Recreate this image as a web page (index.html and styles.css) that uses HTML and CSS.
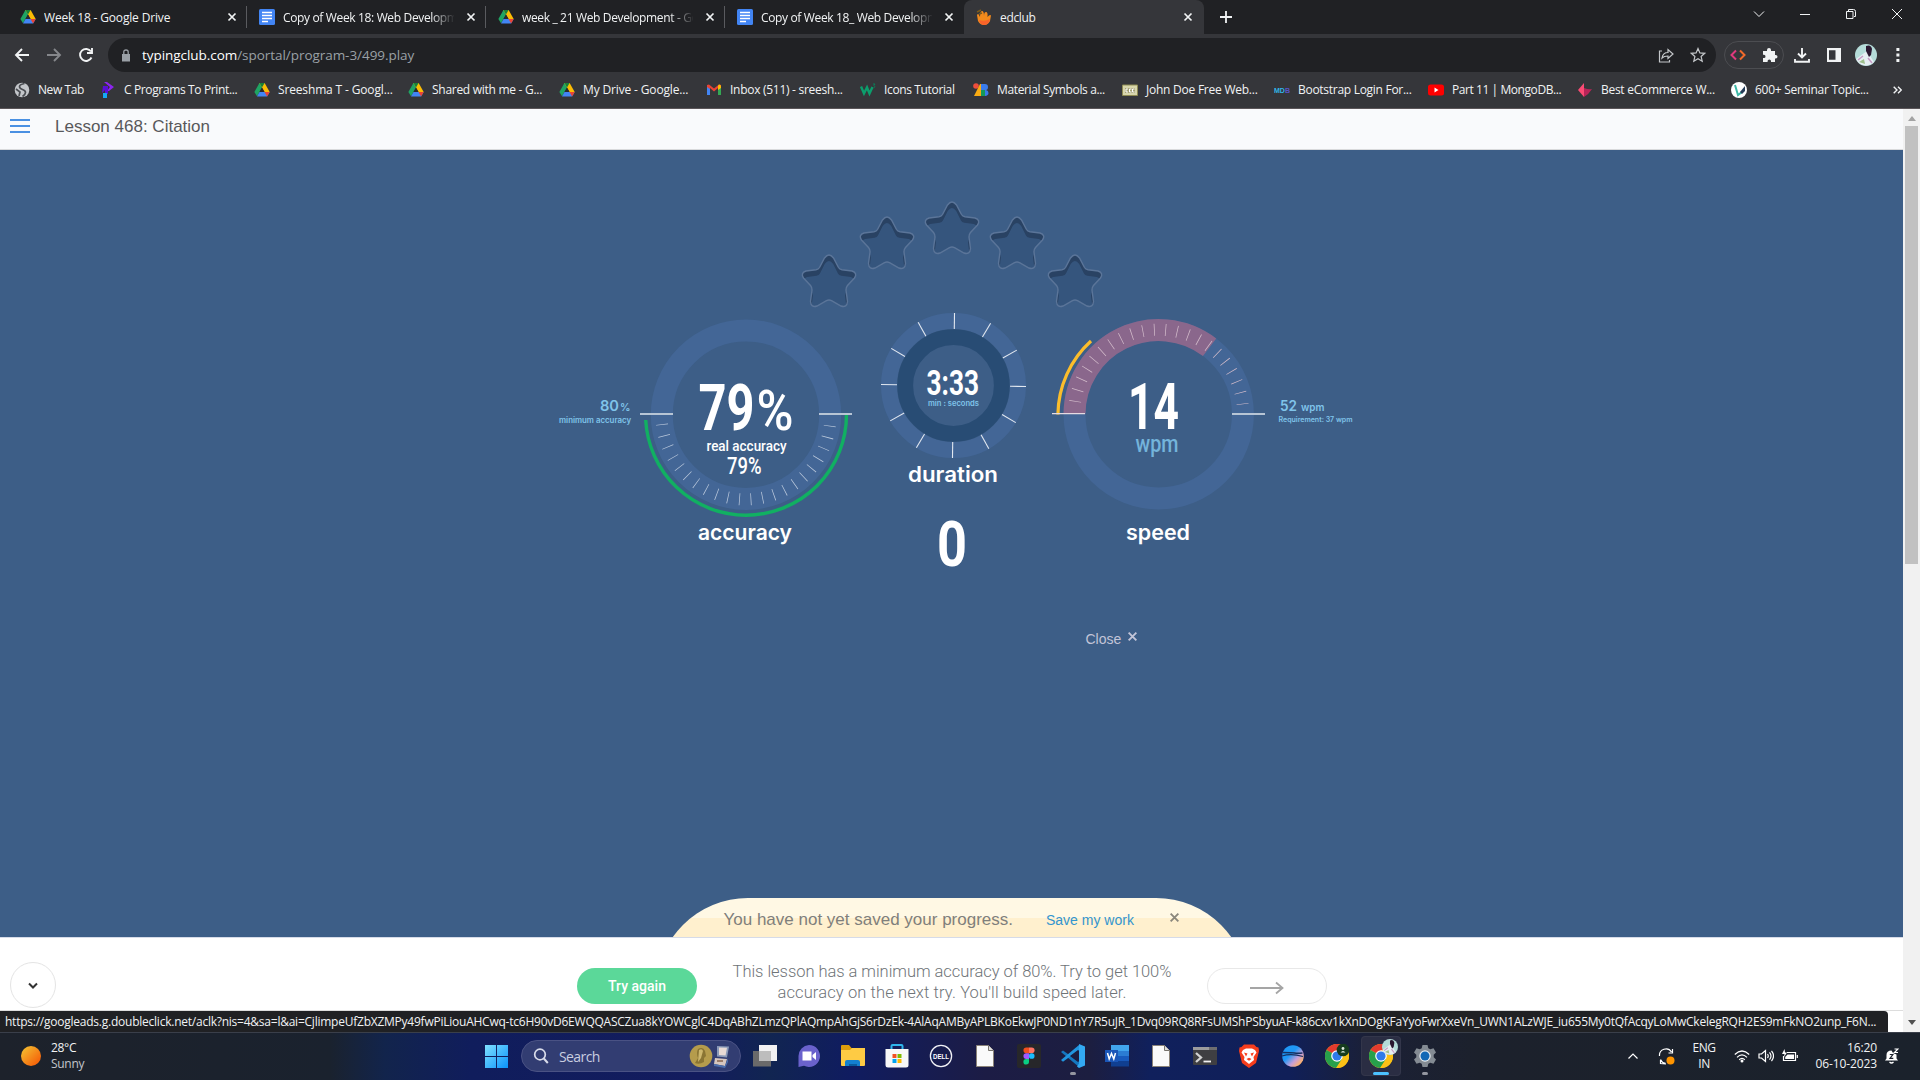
FILE: index.html
```html
<!DOCTYPE html>
<html lang="en">
<head>
<meta charset="utf-8">
<title>edclub</title>
<link rel="stylesheet" href="styles.css">
</head>
<body>
<svg class="defs" width="0" height="0" aria-hidden="true">
  <defs>
    <symbol id="drive" viewBox="0 0 16 16">
      <path d="M5.4 1h5.2L8 5.6 3 14.3.4 10z" fill="#1fa463"/>
      <path d="M5.4 1h5.2l5.1 9h-5.2z" fill="#fbbc04"/>
      <path d="M5.4 1L8 5.6 10.6 1z" fill="#188038"/>
      <path d="M5.5 10h10.2l-2.6 4.5H3z" fill="#4285f4"/>
      <path d="M10.5 10h5.2l-2.6 4.5z" fill="#ea4335"/>
      <path d="M8 5.6L10.5 10h-5z" fill="#292a2d"/>
    </symbol>
    <symbol id="docs" viewBox="0 0 16 16">
      <rect width="16" height="16" rx="1.5" fill="#4285f4"/>
      <path d="M3 4h10M3 7h10M3 10h10M3 13h6" stroke="#fff" stroke-width="1.5" transform="translate(0 -.5)"/>
    </symbol>
    <symbol id="x" viewBox="0 0 10 10"><path d="M1.5 1.5l7 7M8.5 1.5l-7 7" stroke="currentColor" stroke-width="1.7" fill="none"/></symbol>
    <symbol id="chrome" viewBox="0 0 24 24">
      <circle cx="12" cy="12" r="12" fill="#fbc116"/>
      <path d="M12 12L1.6 6A12 12 0 0 1 22.4 6z" fill="#e33b2e"/>
      <path d="M12 12L1.6 6A12 12 0 0 0 11 24L17 14.9z" fill="#27a04b"/>
      <path d="M12 6h10.4A12 12 0 0 1 11.5 24l5.7-9z" fill="#fbc116"/>
      <circle cx="12" cy="12" r="5.8" fill="#fff"/><circle cx="12" cy="12" r="4.6" fill="#2f7bea"/>
    </symbol>
    <symbol id="file" viewBox="0 0 24 24">
      <path d="M3.5 1.5h12l5 5v16h-17z" fill="#fafafa" stroke="#8b8378" stroke-width="1"/>
      <path d="M15.5 1.5v5h5" fill="#ddd" stroke="#77736c"/>
    </symbol>
    <symbol id="photo" viewBox="0 0 22 22">
      <circle cx="11" cy="11" r="11" fill="#b5dcd9"/>
      <path d="M1 15L12 7l7 11a11 11 0 0 1-16 0z" fill="#e6eef2"/>
      <path d="M11 2q5-2 6 3l-1 6-2 2-3-6z" fill="#2a1830"/>
      <path d="M3 16l5-4M13 14l4 5" stroke="#c59bc4" stroke-width="1.5"/><path d="M4 18l5-3 1 5z" fill="#9ec08d"/>
    </symbol>
    <path id="star" d="M22.5 4Q27-2 31.500 4L36.500 13.500Q37.500 15.300 40 15.700L50 17Q55.800 18.800 52.500 24L45.500 31.500Q43.800 33.500 44 36L45.500 47.500Q45 54 39 52L29.500 46.700Q27 45.300 24.500 46.700L15 52Q9 54 8.500 47.500L10 36Q10.200 33.500 8.500 31.500L1.500 24Q-1.800 18.800 4 17L14 15.700Q16.500 15.300 17.500 13.500Z"/>
    <clipPath id="star-clip"><use href="#star"/></clipPath>
    <symbol id="empty-star" viewBox="-1 -1 56 56">
      <use href="#star" fill="#294263"/>
      <g clip-path="url(#star-clip)"><use href="#star" y="6" transform="translate(1.300) scale(.95 1)" fill="#35557d"/></g>
      <use href="#star" fill="none" stroke="#5b7599" stroke-width="1.400"/>
    </symbol>
    <linearGradient id="sun" x1="0" y1="0" x2="1" y2="1"><stop offset=".1" stop-color="#f3bc2f"/><stop offset=".8" stop-color="#f5680c"/></linearGradient>
    <linearGradient id="win" x1="0" y1="0" x2="1" y2="1"><stop stop-color="#7fe0ff"/><stop offset="1" stop-color="#0a93fb"/></linearGradient>
    <linearGradient id="orb" x1="0" y1="0" x2="1" y2="1"><stop offset=".4" stop-color="#1f97f5"/><stop offset=".65" stop-color="#c79fd8"/><stop offset=".85" stop-color="#ffb26a"/></linearGradient>
  </defs>
</svg>

<header class="tabstrip">
  <div class="tab tab-first"><svg class="fav"><use href="#drive"/></svg><span class="tab-title">Week 18 - Google Drive</span><svg class="tab-x"><use href="#x"/></svg></div>
  <div class="tab"><svg class="fav"><use href="#docs"/></svg><span class="tab-title fade">Copy of Week 18: Web Development</span><svg class="tab-x"><use href="#x"/></svg></div>
  <div class="tab"><svg class="fav"><use href="#drive"/></svg><span class="tab-title fade">week _ 21 Web Development - Google</span><svg class="tab-x"><use href="#x"/></svg></div>
  <div class="tab"><svg class="fav"><use href="#docs"/></svg><span class="tab-title fade">Copy of Week 18_ Web Development</span><svg class="tab-x"><use href="#x"/></svg></div>
  <div class="tab active"><svg class="fav" viewBox="0 0 16 16"><path d="M1 6q1-2 2 0l1 2q0-6 2-6t2 5q0-4 2-4t1.500 5Q14 5 15 6.500L14 12q-2 4-6 4t-6-4z" fill="#f28a1c"/><path d="M3 11q6 2 11-1-1 6-6 6-4 0-5-5z" fill="#f8632a"/><path d="M1 3l4-2M3 5l3-1" stroke="#7a5b1c" stroke-width="1.500"/></svg><span class="tab-title">edclub</span><svg class="tab-x"><use href="#x"/></svg></div>
  <svg class="new-tab" viewBox="0 0 12 12"><path d="M6 0v12M0 6h12" stroke="#f1f3f4" stroke-width="1.800"/></svg>
  <div class="window-buttons">
    <svg viewBox="0 0 10 10"><path d="M0 2.500l5 5 5-5"/></svg>
    <svg viewBox="0 0 10 10"><path d="M0 5.500h10"/></svg>
    <svg viewBox="0 0 10 10"><path d="M.5 2.500h6.500v7H.500zM2.500 2V.500h5q2 0 2 2v5H8"/></svg>
    <svg viewBox="0 0 10 10"><path d="M0 0l10 10M10 0L0 10"/></svg>
  </div>
</header>

<nav class="toolbar">
  <svg class="nav-icon" viewBox="0 0 16 16"><path d="M15 8H2M8 2L2 8l6 6" stroke="#f1f3f4"/></svg>
  <svg class="nav-icon" viewBox="0 0 16 16"><path d="M1 8h13M8 2l6 6-6 6" stroke="#85878b"/></svg>
  <svg class="nav-icon" viewBox="0 0 16 16"><path d="M13.500 10.500A6 6 0 1 1 13 4.500M14 1v5H9" stroke="#f1f3f4"/></svg>
  <div class="omnibox">
    <svg class="lock" viewBox="0 0 10 13"><path d="M1 5h8v7.500H1z" fill="#9aa0a6"/><path d="M2.800 5V3q0-2 2.200-2t2.200 2v2" fill="none" stroke="#9aa0a6" stroke-width="1.300"/></svg>
    <span class="url"><b>typingclub.com</b>/sportal/program-3/499.play</span>
    <svg class="omni-icon" viewBox="0 0 16 16"><path d="M4 4H1.500v11h10v-2M4 11q1-5.500 6-5.500V2.500l5 4.500-5 4.500V9q-4 0-6 2z"/></svg>
    <svg class="omni-icon" viewBox="0 0 16 16"><path d="M8 1.500l1.900 4.400 4.800.4-3.600 3.200 1.100 4.700L8 11.700l-4.200 2.500 1.100-4.700L1.300 6.300l4.800-.4z"/></svg>
  </div>
  <div class="extensions">
    <svg viewBox="0 0 16 16"><path d="M6 3.500L1.500 8 6 12.500" fill="none" stroke="#e0397d" stroke-width="2"/><path d="M10 3.500L14.500 8 10 12.500" fill="none" stroke="#f26a2a" stroke-width="2"/></svg>
    <svg viewBox="0 0 16 16"><path d="M1 4h4V3q0-2 2-2t2 2v1h4v4h.7q1.800 0 1.800 1.800t-1.800 1.800H13V15H9v-1q0-1.600-1.700-1.600T5.600 14v1H1v-4h1q1.500 0 1.500-1.600T2 7.800H1z" fill="#f1f3f4"/></svg>
  </div>
  <svg class="tool-icon" viewBox="0 0 16 16"><path d="M8 1v9M4 6.500L8 10.500l4-4M1 12v2.800h14V12" fill="none" stroke="#f1f3f4" stroke-width="1.900"/></svg>
  <svg class="tool-icon" viewBox="0 0 16 16"><path d="M1 1h14v14H1zM3 3.200v9.600h6.500V3.200z" fill="#f1f3f4" fill-rule="evenodd"/></svg>
  <svg class="avatar"><use href="#photo"/></svg>
  <svg class="menu-dots" viewBox="0 0 4 14"><path d="M.4 0h3v3h-3zM.4 5.500h3v3h-3zM.4 11h3v3h-3z" fill="#f1f3f4"/></svg>
</nav>

<nav class="bookmarks">
  <a class="tight"><svg viewBox="0 0 16 16"><circle cx="8" cy="8" r="7.300" fill="#c3c6ca"/><path d="M10.500 1.500q-5 1-5 3t3 3 3 3-3 4M2 7l4 3-1 4" fill="none" stroke="#4a4d52" stroke-width="1.700"/></svg>New Tab</a>
  <a class="snug"><svg viewBox="0 0 16 16"><path d="M4 0h3l7 5-5 4H7l3-4z" fill="#8d25f0"/><path d="M3 4h5v8H5V8l-3 3z" fill="#5a0fd6"/><path d="M3 11h4v5H3z" fill="#14a9f5"/></svg>C Programs To Print...</a>
  <a class="loose"><svg><use href="#drive"/></svg>Sreeshma T - Googl...</a>
  <a><svg><use href="#drive"/></svg>Shared with me - G...</a>
  <a class="loose"><svg><use href="#drive"/></svg>My Drive - Google...</a>
  <a><svg viewBox="0 0 16 16"><path d="M1 3v10h3V6l4 3.500L12 6v7h3V3l-2-.5L8 6.500 3 2.500z" fill="#ea4335"/><path d="M1 5v8h3V7z" fill="#4285f4"/><path d="M15 5v8h-3V7z" fill="#34a853"/><path d="M12 3.500l1-1q2 0 2 2V6l-3 2z" fill="#fbbc04"/></svg>Inbox (511) - sreesh...</a>
  <a class="snug"><svg viewBox="0 0 16 16"><path d="M1 4.500l3 7 3-6 2.500 6 3-6.500" fill="none" stroke="#0c9d6c" stroke-width="2.400"/><path d="M13 2h2l-1 1.500 1 1.200L13.500 6" fill="none" stroke="#0c7d58"/></svg>Icons Tutorial</a>
  <a class="snug"><svg viewBox="0 0 16 16"><circle cx="3" cy="4" r="2.800" fill="#ef4d3b"/><path d="M1 14L7 2h2v12z" fill="#f9ab13"/><path d="M8 2h4q3 0 3 3t-2 3q2.500.5 2.500 3T12 14H8z" fill="#3a7bea"/><path d="M8 8h4v6H8z" fill="#159958"/></svg>Material Symbols a...</a>
  <a class="jd"><svg viewBox="0 0 16 16"><path d="M.5 3h15v10.500H.5z" fill="#d8d6ab" stroke="#8e8b53"/><path d="M3 6h10v5H3z" fill="#a5a275"/><path d="M6 7H4v3h2M9.500 7H7.500v3h2M12.500 7h-2v3h2" stroke="#fff" fill="none"/></svg>John Doe Free Web...</a>
  <a><svg viewBox="0 0 16 16"><text x="0" y="10.500" class="mdb" textLength="16" lengthAdjust="spacingAndGlyphs"><tspan fill="#31b5e8">MD</tspan><tspan fill="#5a55c8">B</tspan></text></svg>Bootstrap Login For...</a>
  <a class="tight"><svg viewBox="0 0 16 16"><rect y="2.500" width="16" height="11" rx="2.500" fill="#f00"/><path d="M6.500 5.500v5l4-2.500z" fill="#fff"/></svg>Part 11 | MongoDB...</a>
  <a><svg viewBox="0 0 16 16"><path d="M7 1v14L1 8z" fill="#fb4b74"/><path d="M7 6q5 2 8 1-3 5-8 8z" fill="#b82458"/></svg>Best eCommerce W...</a>
  <a><svg viewBox="0 0 16 16"><circle cx="8" cy="8" r="8" fill="#fff"/><path d="M4 3l3 10 4-3" fill="none" stroke="#3fb9a8" stroke-width="2"/><path d="M9 10l5-6v5l-3 3z" fill="#243c58"/></svg>600+ Seminar Topic...</a>
  <svg class="overflow" viewBox="0 0 9 8"><path d="M.7.700L4 4 .7 7.300M5 .700L8.300 4 5 7.300" fill="none" stroke="#f1f3f4" stroke-width="1.400"/></svg>
</nav>

<div class="viewport">
  <div class="page">
    <div class="lesson-bar">
      <div class="burger"><i></i><i></i><i></i></div>
      <h1>Lesson 468: Citation</h1>
    </div>

    <main class="stage">
      <div class="stars">
        <svg class="low"><use href="#empty-star"/></svg><svg class="mid s2"><use href="#empty-star"/></svg><svg class="s3"><use href="#empty-star"/></svg><svg class="mid s4"><use href="#empty-star"/></svg><svg class="low s5"><use href="#empty-star"/></svg>
      </div>
      <div class="gauges">
        <svg class="gauge wide" viewBox="550 310 320 265">
          <circle class="ring" cx="746" cy="414.700" r="84.200"/>
          <path class="ticks" pathLength="166.400" stroke-dasharray=".5 7.400" d="M829.800 425.700A84.500 84.500 0 0 1 662 424.200"/>
          <path class="arc-green" d="M846.500 414.700A100.500 100.500 0 0 1 746 515.200A100.500 100.500 0 0 1 645.700 420"/>
          <path class="mark" d="M640 414h33M819 414h33"/>
          <g class="num">
            <text x="698.500" y="429.700" font-size="65.500" textLength="56" lengthAdjust="spacingAndGlyphs">79</text>
            <text class="light" x="756.500" y="429.700" font-size="56" textLength="37" lengthAdjust="spacingAndGlyphs">%</text>
            <text class="light" x="706.500" y="451" font-size="15" textLength="80" lengthAdjust="spacingAndGlyphs">real accuracy</text>
            <text class="light" x="727" y="473.700" font-size="23" textLength="34.500" lengthAdjust="spacingAndGlyphs">79%</text>
          </g>
          <text class="label" x="698" y="540" textLength="94" lengthAdjust="spacingAndGlyphs">accuracy</text>
          <g class="note">
            <text x="600" y="411" font-size="14" textLength="19" lengthAdjust="spacingAndGlyphs">80</text>
            <text x="620" y="411" font-size="11" textLength="10.500" lengthAdjust="spacingAndGlyphs">%</text>
            <text x="559" y="423" font-size="7.500" textLength="72" lengthAdjust="spacingAndGlyphs">minimum accuracy</text>
          </g>
        </svg>
        <svg class="gauge narrow" viewBox="870 310 166 265">
          <circle cx="953.500" cy="385.500" r="64.500" fill="none" stroke="#436696" stroke-width="16"/>
          <circle cx="953.500" cy="385.500" r="48.300" fill="none" stroke="#284c74" stroke-width="15.800"/>
          <g class="dial-ticks" transform="translate(953.500 385.500) rotate(.800)">
            <path d="M56.500 0h16"/><path d="M56.500 0h16" transform="rotate(30)"/><path d="M56.500 0h16" transform="rotate(60)"/><path d="M56.500 0h16" transform="rotate(90)"/>
            <path d="M56.500 0h16" transform="rotate(120)"/><path d="M56.500 0h16" transform="rotate(150)"/><path d="M56.500 0h16" transform="rotate(180)"/><path d="M56.500 0h16" transform="rotate(210)"/>
            <path d="M56.500 0h16" transform="rotate(240)"/><path d="M56.500 0h16" transform="rotate(270)"/><path d="M56.500 0h16" transform="rotate(300)"/><path d="M56.500 0h16" transform="rotate(330)"/>
          </g>
          <g class="num">
            <text x="926.500" y="394.700" font-size="35.500" textLength="52.500" lengthAdjust="spacingAndGlyphs">3:33</text>
            <text x="937" y="565.700" font-size="63" textLength="30" lengthAdjust="spacingAndGlyphs">0</text>
          </g>
          <text class="tiny" x="928" y="406" textLength="51" lengthAdjust="spacingAndGlyphs">min : seconds</text>
          <text class="label" x="908" y="482" textLength="90" lengthAdjust="spacingAndGlyphs">duration</text>
        </svg>
        <svg class="gauge wide" viewBox="1036 310 320 265">
          <circle class="ring" cx="1158.700" cy="414.300" r="84.200"/>
          <path d="M1074.500 413.700A84.200 84.200 0 0 1 1209.600 347.200" fill="none" stroke="#8a678c" stroke-width="22"/>
          <path class="ticks pink" pathLength="165.100" stroke-dasharray=".5 7.340" d="M1075.100 401.700A84.500 84.500 0 0 1 1242.600 404.300"/>
          <path class="arc-yellow" d="M1057.900 414.500A101 101 0 0 1 1091 341"/>
          <path class="mark thin" d="M1052 413.700h33"/><path class="mark" d="M1232 414h33"/>
          <g class="num">
            <text x="1128" y="429" font-size="65" textLength="51" lengthAdjust="spacingAndGlyphs">14</text>
            <text class="unit" x="1135.500" y="451.700" font-size="23" textLength="43" lengthAdjust="spacingAndGlyphs">wpm</text>
          </g>
          <text class="label" x="1126" y="540" textLength="64" lengthAdjust="spacingAndGlyphs">speed</text>
          <g class="note">
            <text x="1280" y="411" font-size="14" textLength="17" lengthAdjust="spacingAndGlyphs">52</text>
            <text x="1301" y="411" font-size="10.500" textLength="23.500" lengthAdjust="spacingAndGlyphs">wpm</text>
            <text x="1278.500" y="422" font-size="7.300" textLength="74" lengthAdjust="spacingAndGlyphs">Requirement: 37 wpm</text>
          </g>
        </svg>
      </div>
      <div class="close-link"><span>Close</span><svg><use href="#x"/></svg></div>
      <div class="save-wrap">
        <div class="save-banner">
          <span class="save-text">You have not yet saved your progress.</span>
          <a class="save-link">Save my work</a>
          <svg class="save-x"><use href="#x"/></svg>
        </div>
      </div>
    </main>

    <footer class="actions">
      <div class="round"><svg viewBox="0 0 10 8"><path d="M1 1.500l4 4 4-4" fill="none" stroke="#333" stroke-width="2"/></svg></div>
      <button class="retry">Try again</button>
      <p class="hint"><span class="h1">This lesson has a minimum accuracy of 80%. Try to get 100%</span><span class="h2">accuracy on the next try. You'll build speed later.</span></p>
      <div class="next"><svg viewBox="0 0 34 14"><path d="M0 7h32M26 1.500L32.500 7 26 12.500" fill="none" stroke="#a5a5a5" stroke-width="1.800"/></svg></div>
    </footer>
  </div>
  <div class="scrollbar">
    <svg viewBox="0 0 8 5"><path d="M4 0l4 5H0z" fill="#a3a3a3"/></svg>
    <div class="thumb"></div>
    <svg viewBox="0 0 8 5"><path d="M0 0h8L4 5z" fill="#505050"/></svg>
  </div>
  <div class="status">https://googleads.g.doubleclick.net/aclk?nis=4&amp;sa=l&amp;ai=CjlimpeUfZbXZMPy49fwPiLiouAHCwq-tc6H90vD6EWQQASCZua8kYOWCglC4DqABhZLmzQPlAQmpAhGjS6rDzEk-4AlAqAMByAPLBKoEkwJP0ND1nY7R5uJR_1Dvq09RQ8RFsUMShPSbyuAF-k86cxv1kXnDOgKFaYyoFwrXxeVn_UWN1ALzWJE_iu655My0tQfAcqyLoMwCkelegRQH2ES9mFkNO2unp_F6N...</div>
</div>

<div class="taskbar">
  <div class="weather">
    <svg viewBox="0 0 20 20"><circle cx="10" cy="10" r="10" fill="url(#sun)"/></svg>
    <div><b>28°C</b><span>Sunny</span></div>
  </div>
  <svg class="start" viewBox="0 0 24 24"><path d="M0 0h11.500v11.500H0zM12.500 0H24v11.500H12.500zM0 12.500h11.500V24H0zM12.500 12.500H24V24H12.500z" fill="url(#win)"/></svg>
  <div class="search">
    <svg class="glass" viewBox="0 0 16 16"><circle cx="7" cy="6.500" r="5.300" fill="none" stroke="#d9dcea" stroke-width="1.700"/><path d="M10.800 10.500l4 4.500" stroke="#d9dcea" stroke-width="2"/></svg>
    <span>Search</span>
    <svg class="prize" viewBox="0 0 42 24"><circle cx="12" cy="12" r="11.300" fill="#b59c4c"/><path d="M9 5q5-3 7 2l1 5-2 2v4q-5 3-9 1l3-5q-2-5 0-9z" fill="#8a7533"/><path d="M10 6q3-2 4 1l-2 7-3 4z" fill="#cdb76d"/><path d="M28 2l12 .500-2 11-10-1z" fill="#8a99b8"/><path d="M30 3.500l8 .300-1.500 7.700-6.500-.500z" fill="#e8dad5"/><path d="M26 14l12 1-2 7-11-2z" fill="#d7c7bf"/><path d="M25 20l11 2 3-8v4l-3 6-11-2z" fill="#4c6fae"/><path d="M28 17h6" stroke="#87654f" stroke-width="1.500"/></svg>
  </div>
  <div class="apps">
    <svg viewBox="0 0 24 24"><path d="M6 1h18v16H6z" fill="#f2f2f2"/><path d="M0 7h18v15.500H0z" fill="#6a6a6a"/><path d="M6 7h12v10H6z" fill="#bdbdbd"/></svg>
    <svg viewBox="0 0 24 24"><path d="M12 1a11 11 0 1 1-5 20.800L1.500 23V12A11 11 0 0 1 12 1z" fill="#6a62cc"/><path d="M5.500 7.500h9v9h-9zM15.500 11l3.500-3v8l-3.500-3z" fill="#fff"/></svg>
    <svg viewBox="0 0 24 24"><path d="M0 2q0-1 1-1h7l2.500 3H23v8H0z" fill="#dc9c0c"/><path d="M0 6h9l2-2h13v17q0 1-1 1H1q-1 0-1-1z" fill="#fecb44"/><path d="M4 22v-4q0-2 2-2h11q2 0 2 2v4z" fill="#1480cf"/><path d="M8 22v-2h8v2z" fill="#0a5c9c"/></svg>
    <svg viewBox="0 0 24 24"><path d="M6.500 6V2q0-1 1-1h9q1 0 1 1v4" fill="none" stroke="#2fb5ec" stroke-width="2"/><path d="M.5 5h23v16q0 2.500-2.500 2.500H3Q.5 23.500.5 21z" fill="#f7f7f7"/><path d="M7.500 10h4v4h-4z" fill="#f25022"/><path d="M12.500 10h4v4h-4z" fill="#7fba00"/><path d="M7.500 15h4v4h-4z" fill="#00a4ef"/><path d="M12.500 15h4v4h-4z" fill="#ffb900"/></svg>
    <svg viewBox="0 0 24 24"><circle cx="12" cy="12" r="10.600" fill="none" stroke="#f1f1f6" stroke-width="1.300"/><text x="4" y="14.700" class="dell" textLength="16" lengthAdjust="spacingAndGlyphs">DELL</text></svg>
    <svg><use href="#file"/></svg>
    <svg viewBox="0 0 24 24"><rect width="24" height="24" rx="2" fill="#27272a"/><path d="M12 3.500H9.300a2.800 2.800 0 0 0 0 5.700H12z" fill="#f24e1e"/><path d="M12 3.500h2.700a2.800 2.800 0 0 1 0 5.700H12z" fill="#ff7262"/><path d="M12 9.200H9.300a2.800 2.800 0 0 0 0 5.700H12z" fill="#a259ff"/><circle cx="14.700" cy="12" r="2.850" fill="#1abcfe"/><path d="M12 14.900H9.300A2.800 2.800 0 1 0 12 17.700z" fill="#0acf83"/></svg>
    <div class="app running"><svg viewBox="0 0 24 24"><path d="M0 8l2-1.500L18 18v5z" fill="#1577bf"/><path d="M0 16l2 1.700L18 6V1z" fill="#2196e0"/><path d="M18 0l6 2.500v19L18 24l-2-1.500 2-3z" fill="#33a9f2"/><path d="M17 6v12l-8-6z" fill="#1c1d40"/></svg></div>
    <svg viewBox="0 0 24 24"><path d="M6 1h18v6H6z" fill="#41a5ee"/><path d="M6 7h18v5H6z" fill="#2b7cd3"/><path d="M6 12h18v5H6z" fill="#185abd"/><path d="M6 17h18v5.500H6z" fill="#103f91"/><path d="M0 6h13v12H0z" fill="#1a56b8"/><path d="M2.500 9l1.700 6L6.500 9.500 8.800 15l1.700-6" fill="none" stroke="#fff" stroke-width="1.500"/></svg>
    <svg><use href="#file"/></svg>
    <svg viewBox="0 0 24 24"><rect y="3" width="24" height="18" rx="1" fill="#3f3f42"/><path d="M0 3h16v3H0z" fill="#9b9b9d"/><path d="M16 3h8v3h-8z" fill="#6e6e70"/><path d="M3 9l5 4.500L3 18" fill="none" stroke="#d4d4d4" stroke-width="2.300"/><path d="M10.500 17.500H18" stroke="#f1f1f1" stroke-width="1.800"/></svg>
    <svg viewBox="0 0 24 24"><path d="M7 .500h10l2.500 2.500 2 .500L22 7l-3 12-7 5-7-5L2 7l.500-3.500 2-.500z" fill="#f63d1c"/><path d="M6 6l3-1.500h6L18 6l1.500 2.500-3 4.500.5 3-5 4-5-4 .500-3-3-4.500z" fill="#fff"/><path d="M7 8.500l3.500 1-1.500 3zM17 8.500l-3.500 1 1.500 3zM9.500 15l2.500-1.300 2.500 1.300-2.500 1.800z" fill="#f63d1c"/></svg>
    <svg viewBox="0 0 24 24"><circle cx="12" cy="12" r="10.800" fill="url(#orb)"/><path d="M1.500 8.500q9 0 12 .500t8 0M1 12q9-3 21 .500" fill="none" stroke="#16305f" stroke-width="1.300"/></svg>
    <svg viewBox="0 0 24 24"><use href="#chrome"/><circle cx="18" cy="6" r="6.300" fill="#163c1f"/><circle cx="18" cy="4.500" r="1.400" fill="#dfe9df"/><path d="M15.500 8.500q2.500-3 5 0z" fill="#dfe9df"/></svg>
    <div class="app current"><svg viewBox="0 0 24 24"><use href="#chrome"/></svg><svg class="badge" viewBox="0 0 22 22"><use href="#photo"/></svg></div>
    <div class="app running"><svg viewBox="0 0 24 24"><path d="M9.500 1h5l.8 3.200 2 1 3.200-.9 2.500 4.200-2.300 2.300v2.400l2.300 2.300-2.500 4.200-3.200-.9-2 1-.8 3.200h-5l-.8-3.200-2-1-3.200.9L1 15.500l2.300-2.300v-2.400L1 8.500l2.500-4.200 3.200.9 2-1z" fill="#848b93"/><circle cx="12" cy="12" r="5.700" fill="#e9edf1"/><circle cx="12" cy="12" r="4.500" fill="#1368b5"/></svg></div>
  </div>
  <div class="tray">
    <svg class="caret" viewBox="0 0 12 8"><path d="M1.500 6.500L6 2l4.500 4.500"/></svg>
    <svg class="sync" viewBox="0 0 17 17"><path d="M1.500 8A6.500 6.500 0 0 1 13.500 4M14.500 1v4h-4M8 16l-5.500-.500V12M2.500 11.500q2 4 5 3.500"/><circle cx="12.500" cy="12.500" r="4" fill="#ff9500" stroke="none"/></svg>
    <div class="lang"><span>ENG</span><span>IN</span></div>
    <svg class="wifi" viewBox="0 0 16 14"><path d="M.8 5.500q7.200-7 14.400 0M3 8.300q5-5 10 0M5.200 10.700q2.800-2.700 5.600 0"/><circle cx="8" cy="12" r="1.500" fill="#fff" stroke="none"/></svg>
    <svg class="vol" viewBox="0 0 16 14"><path d="M1 5h2.500L7.500 1.500v11L3.500 9H1zM9.500 5q1.500 2 0 4M11.500 3.300q3 3.700 0 7.400M13.500 1.800q4 5.200 0 10.400"/></svg>
    <svg class="batt" viewBox="0 0 16 14"><path d="M5 3.500h8.500v8h-12V7M15.300 6v3"/><path d="M5.500 5.500h6.500v4.500H3.200V8z" fill="#fff" stroke="none"/><path d="M2.500 0L0 5h2.500L2 8l3-4.500H3z" fill="#fff" stroke="none"/></svg>
    <div class="clock"><span>16:20</span><span>06-10-2023</span></div>
    <svg class="bell" viewBox="0 0 14 16"><path d="M0 12.500l1.500-2V7q0-4.500 5-4.500L8 5l3.500 1.500v4l1.500 2z" fill="#fff" stroke="none"/><path d="M4.500 14q2 2 4 0M9.500 1h3.500L9.500 4.500H13"/><path d="M4.800 6.500h3L5 10.300h3.300" stroke="#1c222d"/></svg>
  </div>
</div>
</body>
</html>
```

FILE: styles.css
```css
* { box-sizing: border-box; }

body {
  margin: 0;
  width: 1920px;
  height: 1080px;
  overflow: hidden;
  display: flex;
  flex-direction: column;
  background: #35363a;
  font-family: "Open Sans", "Noto Sans", sans-serif;
  font-size: 12px;
  color: #f1f3f4;
}

.defs { position: absolute; }
svg { display: block; flex: none; }

/* Browser: tabs */
.tabstrip {
  height: 34px;
  flex: none;
  display: flex;
  background: #202124;
  padding-left: 8px;
}
.tab {
  width: 239px;
  display: flex;
  align-items: center;
  padding: 0 9px 0 12px;
  border-right: 1px solid transparent;
  border-image: linear-gradient(#202124 7px, #5a5b5f 7px, #5a5b5f 27px, #202124 27px) 1;
}
.tab:nth-child(4) { border-image: none; }
.tab-first .tab-title { letter-spacing: -.16px; }
.tab.active {
  width: 240px;
  background: #35363a;
  border: 0;
  border-image: none;
  border-radius: 8px 8px 0 0;
}
.fav { width: 16px; height: 16px; }
.tab-title {
  width: 172px;
  margin-left: 8px;
  overflow: hidden;
  white-space: nowrap;
  letter-spacing: -.35px;
}
.fade { -webkit-mask-image: linear-gradient(90deg, #000 148px, transparent 172px); mask-image: linear-gradient(90deg, #000 148px, transparent 172px); }
.tab-x { width: 10px; height: 10px; margin-left: 12px; }
.active .tab-x { margin-left: 11px; }
.new-tab { width: 12px; height: 12px; margin: 11px 0 0 16px; }
.window-buttons { margin: 9px 18px 0 auto; display: flex; gap: 36px; }
.window-buttons svg { width: 10px; height: 10px; overflow: visible; }
.window-buttons path { fill: none; stroke: #f1f3f4; stroke-width: 1; }

/* Browser: toolbar */
.toolbar {
  height: 42px;
  flex: none;
  display: flex;
  align-items: center;
  padding-left: 14px;
}
.nav-icon { width: 16px; height: 16px; margin-right: 16px; }
.nav-icon path { fill: none; stroke-width: 1.9; }
.omnibox {
  width: 1608px;
  height: 34px;
  margin-left: -2px;
  border-radius: 17px;
  background: #202124;
  display: flex;
  align-items: center;
  padding: 0 10px 0 13px;
}
.lock { width: 10px; height: 13px; }
.url { flex: 1; margin-left: 11px; font-size: 13.5px; letter-spacing: -.05px; color: #9aa0a6; }
.url b { font-weight: 400; color: #fff; }
.omni-icon { width: 16px; height: 16px; margin-left: 16px; }
.omni-icon path { fill: none; stroke: #c4c7ca; stroke-width: 1.2; }
.extensions {
  width: 60px;
  height: 28px;
  margin: 0 10px 0 8px;
  border: 1px solid #4c4d51;
  border-radius: 14px;
  display: flex;
  align-items: center;
  justify-content: space-between;
  padding: 0 5px;
}
.extensions svg, .tool-icon { width: 16px; height: 16px; }
.tool-icon { margin-right: 16px; }
.avatar { width: 22px; height: 22px; margin-left: -3px; }
.menu-dots { width: 4px; height: 14px; margin-left: 19px; }

/* Browser: bookmarks */
.bookmarks {
  height: 33px;
  flex: none;
  display: grid;
  grid-template-columns: 86px 154px 154px 151px 147px 154px 113px 149px 152px 154px 149px 154px 162px 9px;
  align-items: center;
  padding: 0 0 5px 14px;
  border-bottom: 1px solid #5b5659;
}
.bookmarks a { display: flex; align-items: center; gap: 8px; white-space: nowrap; letter-spacing: -.28px; }
.bookmarks .tight { letter-spacing: -.43px; }
.bookmarks .snug { letter-spacing: -.36px; }
.bookmarks .loose { letter-spacing: -.15px; }
.bookmarks .jd { letter-spacing: -.24px; }
.bookmarks a svg { width: 16px; height: 16px; }
.bookmarks .overflow { width: 9px; height: 8px; }
.mdb { font: 700 7px "Liberation Sans", sans-serif; letter-spacing: 0; }

/* Page */
.viewport { position: relative; height: 923px; flex: none; display: flex; background: #fff; }
.page { width: 1903px; display: flex; flex-direction: column; font-family: "Liberation Sans", Arial, sans-serif; }
.lesson-bar {
  height: 41px;
  display: flex;
  padding-left: 10px;
  background: #f9fafc;
  border-bottom: 1px solid #d9dadc;
}
.burger { width: 20px; margin-top: 10px; display: flex; flex-direction: column; gap: 4px; }
.burger i { height: 2px; background: #4a90e2; }
h1 { margin: 8px 0 0 25px; font-size: 17px; line-height: 20px; font-weight: 400; color: #58585b; }

.stage { height: 787px; flex: none; background: #3d5e87; overflow: hidden; display: flex; flex-direction: column; }
.stars { height: 110px; margin-top: 50px; padding-left: 801.3px; display: flex; align-items: flex-start; }
.stars svg { width: 56px; height: 56px; }
.stars .mid { margin-top: 15px; }
.stars .low { margin-top: 52.5px; }
.stars .s2 { margin-left: 2px; }
.stars .s3, .stars .s4 { margin-left: 8.7px; }
.stars .s5 { margin-left: 2px; }

.gauges { display: flex; padding-left: 550px; }
.gauge { height: 265px; }
.wide { width: 320px; }
.narrow { width: 166px; }
.ring { fill: none; stroke: #436696; stroke-width: 22; }
.ticks { fill: none; stroke: #b9c7db; stroke-width: 12; }
.ticks.pink { stroke: #d3bccb; }
.dial-ticks { fill: none; stroke: #e2e8f0; stroke-width: 1.1; }
.arc-green { fill: none; stroke: #11b062; stroke-width: 3.4; }
.arc-yellow { fill: none; stroke: #fbbd2b; stroke-width: 3.2; }
.mark { fill: none; stroke: #b7c5d5; stroke-width: 2; }
.mark.thin { stroke: #e6dbe2; stroke-width: 1.2; }
.num { font-family: Roboto, sans-serif; font-weight: 700; fill: #fff; }
.num .light { font-weight: 500; }
.num .unit { font-weight: 500; fill: #74b4db; }
.label { font: 600 21.5px Inter, sans-serif; fill: #fff; }
.note, .tiny { font-family: Inter, sans-serif; font-weight: 600; fill: #80c4ea; }
.tiny { font-size: 7.5px; }

.close-link { display: flex; align-items: center; gap: 6px; margin: 56px 0 0 1085.5px; font-size: 14px; line-height: 16px; color: #c3c5d8; }
.close-link svg { width: 11px; height: 11px; margin-bottom: 5px; }

.save-wrap { height: 39px; width: 592px; margin: auto 0 0 656px; overflow: hidden; flex: none; }
.save-banner {
  height: 184px;
  border-radius: 92px;
  background: linear-gradient(#fff8e4 20px, #fff0ce 20px);
  display: flex;
  align-items: flex-start;
  padding: 11px 0 0 67.5px;
}
.save-text { width: 322.5px; margin-top: 1px; font-size: 17px; line-height: 20px; color: #7f7f7c; white-space: nowrap; }
.save-link { width: 122.5px; font-size: 14px; line-height: 22px; color: #3395cf; }
.save-x { width: 11px; height: 11px; margin-top: 3px; color: #8a877d; }

.actions {
  height: 74px;
  flex: none;
  display: flex;
  align-items: center;
  padding: 22px 0 0 10px;
  background: #fff;
  border-top: 1px solid #d6dbe8;
  border-bottom: 1px solid #ddd;
  font-family: Roboto, sans-serif;
}
.round { width: 46px; height: 46px; border: 1px solid #e4e4e4; border-radius: 50%; display: grid; place-items: center; }
.round svg { width: 10px; height: 8px; margin-top: 1px; }
.retry {
  width: 120px;
  height: 36px;
  margin: 2px 0 0 521px;
  border: 0;
  border-radius: 18px;
  background: #5bd899;
  color: #fff;
  font: 500 14px Roboto, sans-serif;
  padding: 0;
}
.hint { width: 510px; margin: -6px 0 0; text-align: center; font-weight: 300; font-size: 16.5px; line-height: 21px; color: #6f7478; white-space: nowrap; }
.hint span { display: block; }
.h1 { letter-spacing: -.04px; }
.h2 { letter-spacing: .12px; }
.next { width: 120px; height: 36px; margin-top: 2px; border: 1px solid #e8e8e8; border-radius: 18px; display: grid; place-items: center; }
.next svg { width: 34px; height: 14px; margin-top: 3px; }

.scrollbar { width: 17px; background: #f1f1f1; display: flex; flex-direction: column; align-items: center; padding: 7px 0; }
.scrollbar svg { width: 8px; height: 5px; }
.thumb { width: 13px; height: 438px; margin: 5px 0 auto; background: #c1c1c1; }

.status {
  position: absolute;
  left: 0;
  bottom: 0;
  width: 1888px;
  height: 21px;
  padding-left: 5px;
  background: #202124;
  border-radius: 0 4px 0 0;
  line-height: 22px;
  font-size: 12px;
  letter-spacing: -.238px;
  white-space: nowrap;
  overflow: hidden;
}

/* Taskbar */
.taskbar {
  height: 48px;
  flex: none;
  display: flex;
  align-items: center;
  padding-bottom: 1px;
  border-top: 1px solid #3a3f4a;
  background: linear-gradient(90deg, #1d222b 0, #1a222e 330px, #12244c 385px, #101d5c 470px, #131c5e 700px, #112551 770px, #101c60 850px, #1c1c45 985px, #1c1e40 1090px, #10205c 1150px, #101f58 1290px, #1b2036 1370px, #1c212c 1480px, #1b222c 1920px);
}
.weather { width: 485px; display: flex; align-items: center; gap: 10px; padding-left: 21px; }
.weather > svg { width: 20px; height: 20px; }
.weather b { font-weight: 400; }
.weather b, .weather span { display: block; line-height: 16px; letter-spacing: -.3px; }
.weather span { color: #c3c6cb; }
.start { width: 23px; height: 23px; }
.search {
  width: 220px;
  height: 32px;
  margin-left: 13px;
  border: 1px solid #4a5284;
  border-radius: 16px;
  background: #323d72;
  display: flex;
  align-items: center;
  padding-left: 11px;
  font-size: 14px;
  letter-spacing: -.6px;
  color: #c9cde0;
}
.glass { width: 16px; height: 16px; }
.search span { width: 130px; margin-left: 10px; }
.prize { width: 42px; height: 24px; }
.apps { display: flex; align-items: center; gap: 20px; margin-left: 12px; }
.apps svg { width: 24px; height: 24px; }
.app { position: relative; }
.running::after, .current::after {
  content: "";
  position: absolute;
  left: 9px;
  bottom: -7px;
  width: 6px;
  height: 3px;
  border-radius: 2px;
  background: #9496a0;
}
.current { margin: 0 -8px; padding: 8px; border-radius: 4px; background: #2a2d43; outline: 1px solid #33364a; outline-offset: -1px; }
.current::after { left: 12px; bottom: 1px; width: 16px; background: #4cc2ff; }
.apps .badge { position: absolute; right: 3px; top: 3px; width: 16px; height: 16px; }
.dell { font: 700 6.5px "Liberation Sans", sans-serif; fill: #fff; }
.tray { margin-left: auto; padding-right: 21px; display: flex; align-items: center; }
.tray path { fill: none; stroke: #fff; stroke-width: 1.2; }
.tray path[fill="#fff"] { fill: #fff; }
.tray path[stroke="none"] { stroke: none; }
.tray path[stroke="#1c222d"] { stroke: #1c222d; }
.caret { width: 12px; height: 8px; margin-right: 1px; }
.sync { width: 17px; height: 17px; margin-left: 18px; }
.tray .lang { width: 40px; margin-left: 9px; text-align: center; }
.lang span, .clock span { display: block; line-height: 16px; letter-spacing: -.4px; }
.clock span { letter-spacing: -.1px; }
.wifi, .vol, .batt { width: 16px; height: 14px; }
.wifi { margin-left: 10px; }
.vol, .batt { margin-left: 8px; }
.clock { width: 79px; text-align: right; }
.bell { width: 14px; height: 16px; margin-left: 8px; }
```
